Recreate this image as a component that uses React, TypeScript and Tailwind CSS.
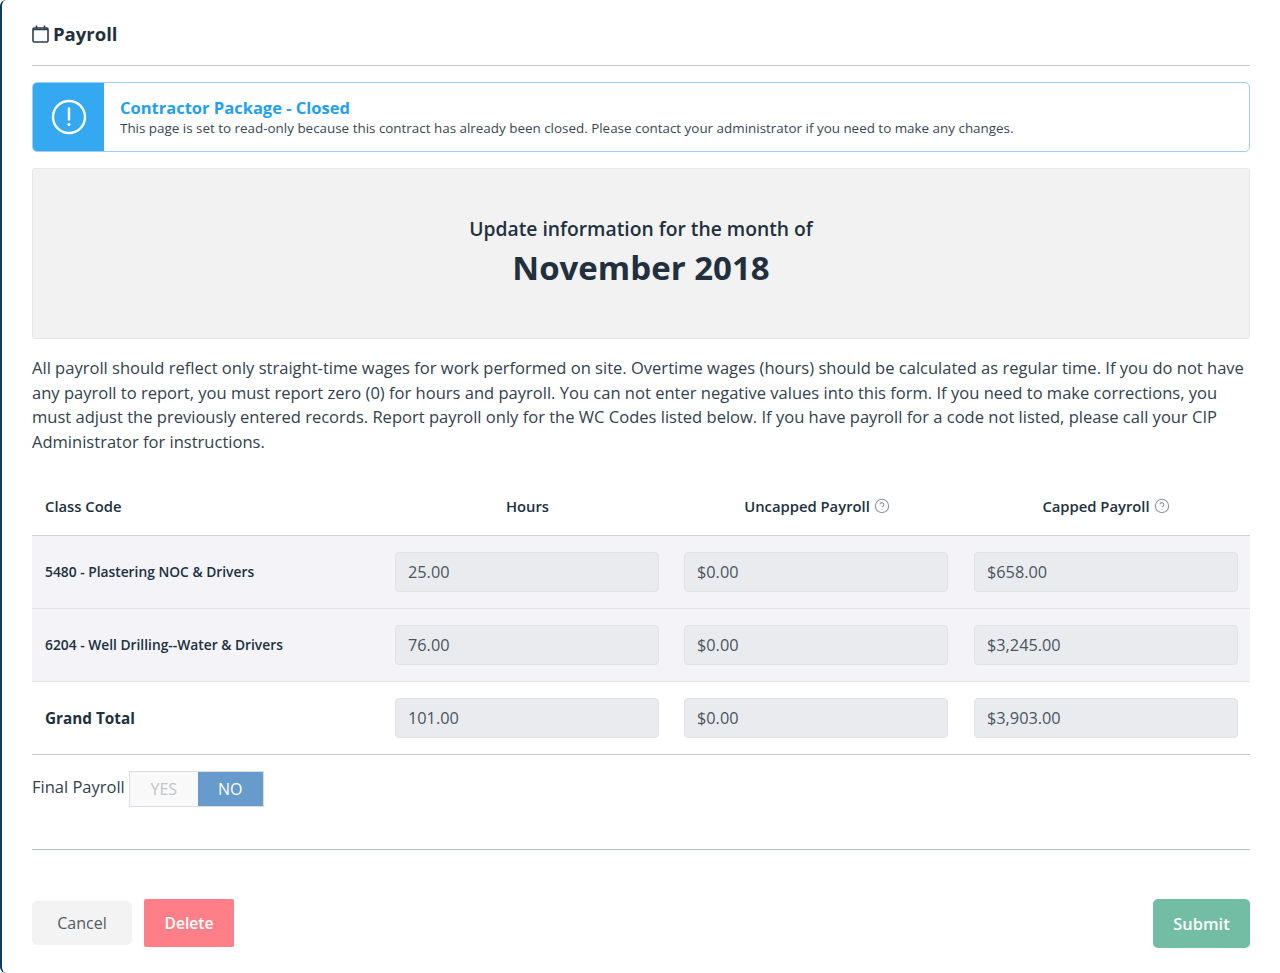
import { CircleHelp } from "lucide-react";

const rows = [
  { label: "5480 - Plastering NOC & Drivers", hours: "25.00", uncapped: "$0.00", capped: "$658.00" },
  { label: "6204 - Well Drilling--Water & Drivers", hours: "76.00", uncapped: "$0.00", capped: "$3,245.00" },
];

function Field({ value }: { value: string }) {
  return (
    <div className="ml-3 flex h-[40px] w-[264px] items-center rounded-[4px] border border-[#e0e2e6] bg-[#eaebef] px-3 text-[16.3px] text-[#4a5560]">
      {value}
    </div>
  );
}

function CalendarIcon() {
  return (
    <svg width="17" height="18" viewBox="0 0 17 18" fill="none" stroke="#2c3e50" strokeWidth="1.6" className="shrink-0">
      <rect x="1" y="3" width="15" height="14" rx="1.2" />
      <path d="M1 4.5h15" strokeWidth="1.5" />
      <path d="M4.5 0.5v3M12.5 0.5v3" />
    </svg>
  );
}

function AlertIcon() {
  return (
    <svg width="36" height="36" viewBox="0 0 36 36" fill="none" stroke="white">
      <circle cx="18" cy="18" r="16" strokeWidth="2.4" />
      <path d="M18 9.5v11" strokeWidth="2.4" strokeLinecap="round" />
      <circle cx="18" cy="25.5" r="1.5" fill="white" stroke="none" />
    </svg>
  );
}

export default function App() {
  return (
    <div className="min-h-[973px] bg-white font-['Open_Sans',sans-serif] text-[#2c3e50]">
      <div className="min-h-[973px] rounded-l-[6px] border-l-2 border-[#0d3b63] pl-[30px] pr-[30px]">
        <div className="flex h-[65px] items-center gap-[4px] pt-[2px]">
          <CalendarIcon />
          <h1 className="text-[18.5px] font-bold leading-[26px] text-[#22303e]">Payroll</h1>
        </div>
        <hr className="border-t border-[#c6c8cc]" />

        <div className="mt-[16px] flex h-[70px] overflow-hidden rounded-[5px] border border-[#a0cdf6]">
          <div className="flex w-[71px] items-center justify-center bg-[#35a8f2]">
            <AlertIcon />
          </div>
          <div className="flex flex-col justify-center pb-[2px] pl-[16px]">
            <div className="text-[16.5px] font-bold leading-[23px] text-[#1fa0f2]">Contractor Package - Closed</div>
            <p className="text-[13.42px] leading-[18px] text-[#3a4754]">
              This page is set to read-only because this contract has already been closed. Please contact your administrator if you need to make any changes.
            </p>
          </div>
        </div>

        <div className="mt-[16px] flex h-[171px] flex-col items-center justify-center rounded-[3px] border border-[#e6e6e6] bg-[#f2f2f2] pb-[1px] text-center">
          <div className="text-[19.3px] font-semibold leading-[28px] text-[#22303e]">Update information for the month of</div>
          <div className="mt-[2px] text-[33px] font-bold leading-[46px] text-[#22303e]">November 2018</div>
        </div>

        <p className="mt-[17px] text-[16.54px] leading-[24.5px] text-[#33414e]">
          All payroll should reflect only straight-time wages for work performed on site. Overtime wages (hours) should be calculated as regular time. If you do not have any payroll to report, you must report zero (0) for hours and payroll. You can not enter negative values into this form. If you need to make corrections, you must adjust the previously entered records. Report payroll only for the WC Codes listed below. If you have payroll for a code not listed, please call your CIP Administrator for instructions.
        </p>

        <div className="mt-[24px] grid h-[58px] grid-cols-[351px_289px_290px_288px] items-center border-b border-[#cfd0d4] pb-[1px] text-[14.8px] font-semibold text-[#22303e]">
          <div className="pl-[13px]">Class Code</div>
          <div className="text-center">Hours</div>
          <div className="flex items-center justify-center gap-[4px]">
            Uncapped Payroll <CircleHelp size={16} strokeWidth={1.6} className="text-[#8f959d]" />
          </div>
          <div className="flex items-center justify-center gap-[4px]">
            Capped Payroll <CircleHelp size={16} strokeWidth={1.6} className="text-[#8f959d]" />
          </div>
        </div>

        {rows.map((row) => (
          <div key={row.label} className="grid h-[73px] grid-cols-[351px_289px_290px_288px] items-center border-b border-[#e3e4e8] bg-[#f3f3f8]">
            <div className="pl-[13px] text-[13.8px] font-semibold text-[#22303e]">{row.label}</div>
            <Field value={row.hours} />
            <Field value={row.uncapped} />
            <Field value={row.capped} />
          </div>
        ))}

        <div className="grid h-[73px] grid-cols-[351px_289px_290px_288px] items-center border-b border-[#c6c8cc]">
          <div className="pl-[13px] text-[15.3px] font-bold text-[#22303e]">Grand Total</div>
          <Field value="101.00" />
          <Field value="$0.00" />
          <Field value="$3,903.00" />
        </div>

        <div className="mt-[16px] flex items-start gap-[4px]">
          <span className="text-[16.5px] leading-[32px] text-[#33414e]">Final Payroll</span>
          <div className="flex h-[36px] overflow-hidden border border-[#d9dce0] text-[16px]">
            <div className="flex w-[68px] items-center justify-center bg-[#f9f9f9] text-[#c0c3c8]">YES</div>
            <div className="flex w-[65px] items-center justify-center bg-[#669bcc] text-white">NO</div>
          </div>
        </div>

        <hr className="mt-[42px] border-t border-[#b4c0bc]" />

        <div className="mt-[49px] flex items-start">
          <button className="mt-[2px] h-[44px] w-[100px] rounded-[5px] bg-[#f3f3f3] text-[16px] text-[#55595e]">Cancel</button>
          <button className="ml-[12px] h-[48px] w-[90px] rounded-[2px] bg-[#fe7f88] pt-[2px] text-[15.6px] font-semibold text-white">Delete</button>
          <button className="ml-auto h-[49px] w-[97px] rounded-[5px] bg-[#72bda3] pt-[1px] text-[16.4px] font-semibold text-white">Submit</button>
        </div>
      </div>
    </div>
  );
}
